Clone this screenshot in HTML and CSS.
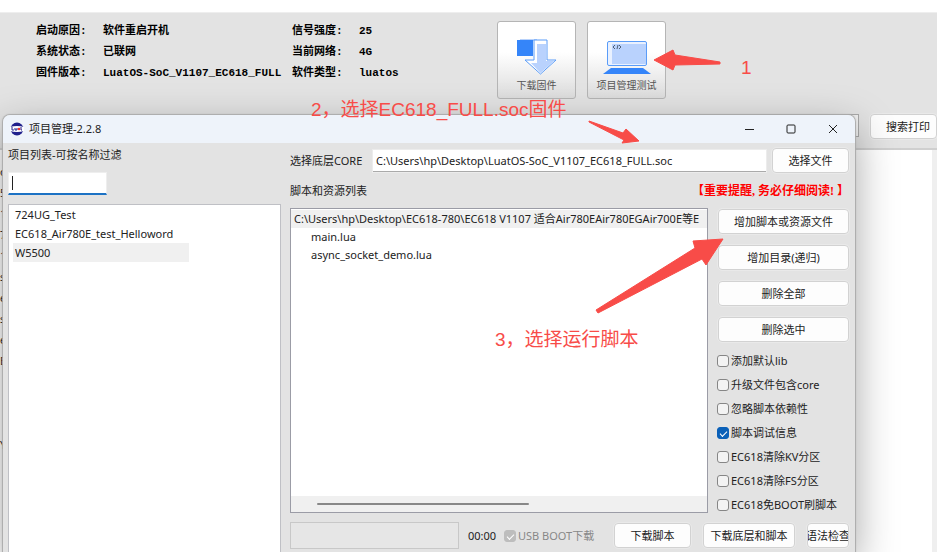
FILE: index.html
```html
<!DOCTYPE html>
<html lang="zh-CN">
<head>
<meta charset="utf-8">
<title>项目管理-2.2.8</title>
<link rel="stylesheet" href="styles.css">
</head>
<body>
<main class="app">
  <header class="status">
    <dl class="info info-wide">
      <dt>启动原因:</dt><dd>软件重启开机</dd>
      <dt>系统状态:</dt><dd>已联网</dd>
      <dt>固件版本:</dt><dd>LuatOS-SoC_V1107_EC618_FULL</dd>
    </dl>
    <dl class="info">
      <dt>信号强度:</dt><dd>25</dd>
      <dt>当前网络:</dt><dd>4G</dd>
      <dt>软件类型:</dt><dd>luatos</dd>
    </dl>
    <div class="tools">
      <button class="tool" type="button">
        <svg width="42" height="38" viewBox="0 0 42 38" aria-hidden="true">
          <path d="M4 1h17v2H4z" fill="#b8d2fb"/>
          <path d="M1 2h16v16H1z" fill="#3585f9"/>
          <path d="M18 2h13v20h9L24.500 36 9 22h9z" fill="#fff" stroke="#5a9cf8" stroke-linejoin="round"/>
          <path d="M21 6h9v17h8L24.500 35 15 25h6z" fill="#b9d2fd"/>
        </svg>
        <span>下载固件</span>
      </button>
      <button class="tool" type="button">
        <svg width="50" height="38" viewBox="0 0 50 38" aria-hidden="true">
          <rect x="5.500" y="3.500" width="39" height="24" rx="1.500" fill="#e9f1ff" stroke="#5a9cf8"/>
          <path d="M10 6h34v20H10z" fill="#b9d2fd"/>
          <path d="M13 7l-2 2 2 2M16 7l-1 4M17 7l2 2-2 2" fill="none" stroke="#345" stroke-width=".8"/>
          <path d="M9 30h32l8 6H1z" fill="#3585f9"/>
        </svg>
        <span>项目管理测试</span>
      </button>
    </div>
  </header>
  <div class="search">
    <input class="search-text" type="text" aria-label="搜索">
    <button class="btn search-btn" type="button">搜索打印</button>
  </div>
  <section class="log">
    <div class="log-text">
      <p>o</p><p>5</p><p>1</p><p>7</p><p>1</p><p>s</p><p>e</p><p>s</p><p>e</p><p>E</p><p></p><p></p><p></p><p>Y</p>
    </div>
    <div class="log-track"></div>
  </section>
</main>

<section class="dialog">
  <header class="titlebar">
    <svg width="14" height="14" viewBox="0 0 14 14" aria-hidden="true">
      <circle cx="7" cy="7" r="6.500" fill="#20208c"/>
      <path d="M0 5q7-2 14 0v4q-7 2-14 0z" fill="#fff"/>
      <path d="M2 5v3h2M5 6v2h2V6M11 5v3h1" fill="none" stroke="#20208c"/>
      <circle cx="9" cy="7" r="1.300" fill="#e33"/>
    </svg>
    <h1>项目管理-2.2.8</h1>
    <div class="controls">
      <button type="button" aria-label="最小化"><svg width="10" height="10" viewBox="0 0 10 10"><path d="M1 5.500h9"/></svg></button>
      <button type="button" aria-label="最大化"><svg width="10" height="10" viewBox="0 0 10 10"><rect x="1" y="1" width="8" height="8" rx="1"/></svg></button>
      <button type="button" aria-label="关闭"><svg width="10" height="10" viewBox="0 0 10 10"><path d="M1 1l8 8M9 1L1 9"/></svg></button>
    </div>
  </header>
  <div class="content">
    <aside class="projects">
      <label for="filter">项目列表-可按名称过滤</label>
      <div class="filter-box"><input id="filter" type="text"><i class="caret"></i></div>
      <ul class="project-list">
        <li>724UG_Test</li>
        <li>EC618_Air780E_test_Helloword</li>
        <li class="selected">W5500</li>
      </ul>
    </aside>
    <div class="detail">
      <div class="core-row">
        <label for="core">选择底层CORE</label>
        <input id="core" type="text" value="C:\Users\hp\Desktop\LuatOS-SoC_V1107_EC618_FULL.soc">
        <button class="btn pick" type="button">选择文件</button>
      </div>
      <div class="caption-row"><span>脚本和资源列表</span><strong>【重要提醒, 务必仔细阅读! 】</strong></div>
      <div class="work">
        <div class="scripts">
          <ul>
            <li class="root">C:\Users\hp\Desktop\EC618-780\EC618 V1107 适合Air780EAir780EGAir700E等E</li>
            <li>main.lua</li>
            <li>async_socket_demo.lua</li>
          </ul>
          <div class="track"><div class="thumb"></div></div>
        </div>
        <div class="side">
          <button class="btn" type="button">增加脚本或资源文件</button>
          <button class="btn" type="button">增加目录(递归)</button>
          <button class="btn" type="button">删除全部</button>
          <button class="btn" type="button">删除选中</button>
          <div class="options">
            <label><input type="checkbox">添加默认lib</label>
            <label><input type="checkbox">升级文件包含core</label>
            <label><input type="checkbox">忽略脚本依赖性</label>
            <label><input type="checkbox" checked>脚本调试信息</label>
            <label><input type="checkbox">EC618清除KV分区</label>
            <label><input type="checkbox">EC618清除FS分区</label>
            <label><input type="checkbox">EC618免BOOT刷脚本</label>
          </div>
        </div>
      </div>
      <footer class="actions">
        <div class="progress"></div>
        <span class="time">00:00</span>
        <label class="usb"><input type="checkbox" checked disabled>USB BOOT下载</label>
        <button class="btn download" type="button">下载脚本</button>
        <button class="btn download-all" type="button">下载底层和脚本</button>
        <button class="btn check" type="button">语法检查</button>
      </footer>
    </div>
  </div>
</section>

<div class="notes">
  <svg width="937" height="552" viewBox="0 0 937 552" aria-hidden="true">
    <path d="M654 60L673 50 675 55 720 62V64L675 65 673 70Z"/>
    <path d="M589 121L623 133 626 129 639 141 622 143 624 140 589 122Z"/>
    <path d="M596 310L695 248 693 241 723 239 706 265 702 259 598 313Z"/>
  </svg>
  <span class="note note-one">1</span>
  <span class="note note-two">2，选择EC618_FULL.soc固件</span>
  <span class="note note-three">3，选择运行脚本</span>
</div>
</body>
</html>
```
FILE: styles.css
```css
* { box-sizing: border-box; }

body {
  margin: 0;
  height: 100vh;
  overflow: hidden;
  position: relative;
  background: #fff;
  color: #222;
  font: 11px/18px "Noto Sans", "Noto Sans CJK SC", sans-serif;
}

ul, dl, dd, p, h1 { margin: 0; padding: 0; }
ul { list-style: none; }
button, input { font: inherit; color: inherit; margin: 0; }

.btn {
  height: 25px;
  padding: 0;
  background: #fdfdfd;
  border: 1px solid #d2d2d2;
  border-radius: 4px;
  outline: 1px solid #e9e9e9;
  white-space: nowrap;
  overflow: hidden;
}

/* Main window behind the dialog */
.app {
  height: 100%;
  padding-top: 12px;
  display: flex;
  flex-direction: column;
}

.status {
  height: 102px;
  padding: 8px 0 0 36px;
  display: flex;
  background: #e3e3e3;
  border-top: 1px solid #eee;
}

.info {
  display: grid;
  grid-template-columns: 67px 1fr;
  grid-auto-rows: 21px;
  align-content: start;
  width: 205px;
  color: #000;
  font: bold 11px/20px "Liberation Mono", "Noto Sans CJK SC", monospace;
}

.info-wide { width: 256px; }

.tools { display: flex; gap: 11px; }

.tool {
  width: 79px;
  height: 78px;
  padding: 10px 0 0;
  display: flex;
  flex-direction: column;
  align-items: center;
  background: linear-gradient(#fff 40%, #dcdcdc);
  border: 1px solid #b5b5b5;
  border-radius: 3px;
  color: #555;
  font-size: 10px;
  line-height: 18px;
}

.tool svg { margin-top: 6px; flex: none; }

.search {
  height: 36px;
  display: flex;
  justify-content: flex-end;
  gap: 11px;
  background: #e3e3e3;
  border-bottom: 2px solid #cfcfcf;
}

.search-text {
  width: 320px;
  height: 23px;
  background: #f2f2f2;
  border: 1px solid #aaa;
}

.search-btn { width: 67px; padding-left: 9px; }

.log { flex: 1; display: flex; min-height: 0; }
.log-text { flex: 1; padding-top: 11px; overflow: hidden; }
.log-text p { height: 21px; line-height: 21px; }
.log-track { width: 5px; background: #efefef; }

/* Dialog window */
.dialog {
  position: absolute;
  top: 115px;
  right: 82px;
  bottom: 0;
  left: 3px;
  display: flex;
  flex-direction: column;
  background: #e3e3e3;
  border-radius: 7px 7px 0 0;
  box-shadow: 0 0 1px 1px #aaa, 0 14px 42px rgba(0, 0, 0, .36);
  overflow: hidden;
}

.titlebar {
  height: 28px;
  padding: 0 17px 0 7px;
  display: flex;
  align-items: center;
  gap: 5px;
  background: #eef3fa;
}

.titlebar h1 { font-size: 11px; font-weight: normal; }
.controls { margin-left: auto; display: flex; gap: 32px; }

.controls button {
  padding: 0;
  width: 10px;
  height: 10px;
  display: flex;
  background: none;
  border: 0;
}

.controls path, .controls rect { fill: none; stroke: #222; }

.content {
  flex: 1;
  min-height: 0;
  display: flex;
  gap: 9px;
  padding: 0 6px 0 5px;
}

.projects { width: 273px; display: flex; flex-direction: column; padding-top: 3px; }
.filter-box { position: relative; margin: 8px 0 9px; height: 23px; }

.filter-box input {
  display: block;
  width: 99px;
  height: 23px;
  padding: 0 4px;
  background: #fff;
  border: 1px solid #eee;
  border-bottom: 2px solid #1d72c4;
}

.caret { position: absolute; left: 4px; top: 4px; width: 1px; height: 14px; background: #222; }

.project-list {
  flex: 1;
  padding: 0 4px;
  background: #fff;
  border: 1px solid #bfc0c5;
  border-bottom: 0;
}

.project-list li { width: 176px; height: 19px; padding-left: 2px; line-height: 19px; }
.project-list .selected { background: #f0f0f0; }

.detail {
  flex: 1;
  min-width: 0;
  display: flex;
  flex-direction: column;
  padding: 5px 0 3px;
}

.core-row { display: flex; align-items: center; height: 25px; }
.core-row label { width: 83px; }

.core-row input {
  flex: 1;
  min-width: 0;
  height: 22px;
  padding: 0 3px;
  background: #fff;
  border: 0;
  border-bottom: 1px solid #aaa;
  outline: 1px solid #ececec;
}

.pick { width: 77px; margin-left: 6px; }

.caption-row { height: 35px; display: flex; justify-content: space-between; align-items: center; }
.caption-row strong { color: #f00; font: bold 12px/18px "Liberation Serif", "Noto Sans CJK SC", serif; }

.work { flex: 1; min-height: 0; display: flex; gap: 10px; }

.scripts {
  flex: 1;
  min-width: 0;
  display: flex;
  flex-direction: column;
  justify-content: space-between;
  background: #fff;
  border: 1px solid #9b9ca6;
}

.scripts ul { padding-top: 1px; overflow: hidden; }
.scripts li { height: 18px; padding-left: 20px; white-space: nowrap; }
.scripts .root { padding-left: 3px; background: #f0f0f0; overflow: hidden; }
.track { height: 16px; padding: 7px 178px 0 26px; background: #f0f0f0; }
.thumb { height: 2px; background: #888; border-radius: 1px; }

.side { width: 131px; padding-top: 1px; display: flex; flex-direction: column; gap: 11px; }
.side .btn { flex: none; }
.options { margin: -4px 0 0 -1px; display: grid; grid-auto-rows: 24px; }
.options label, .usb { display: flex; align-items: center; gap: 2px; white-space: nowrap; }

input[type="checkbox"] {
  appearance: none;
  flex: none;
  width: 12px;
  height: 12px;
  background: #f3f3f3;
  border: 1px solid #868686;
  border-radius: 3px;
}

input[type="checkbox"]:checked {
  display: grid;
  place-items: center;
  background: #0a60b8;
  border-color: #0a60b8;
}

input[type="checkbox"]:checked::after {
  content: "";
  width: 6px;
  height: 3px;
  border: solid #fff;
  border-width: 0 0 1px 1px;
  transform: rotate(-45deg);
}

input[type="checkbox"]:disabled { background: #bdbdbd; border-color: #bdbdbd; }

.actions { display: flex; align-items: center; height: 27px; margin-top: 9px; }
.progress { width: 169px; height: 27px; background: #e6e6e6; border: 1px solid #c8c8c8; }
.time { width: 45px; padding-left: 9px; }
.usb { flex: 1; color: #888; }
.download { width: 77px; }
.download-all { width: 92px; margin: 0 12px; }
.check { width: 42px; display: flex; align-items: center; justify-content: center; }

/* Step markers drawn over the screen */
.notes { position: absolute; inset: 0; overflow: hidden; pointer-events: none; color: #f84c48; }
.notes svg { display: block; fill: #f84c48; stroke: #f84c48; stroke-linejoin: round; }
.note { position: absolute; font: 19px/24px "Liberation Sans", "Noto Sans CJK SC", sans-serif; white-space: nowrap; }
.note-one { left: 741px; top: 56px; }
.note-two { left: 311px; top: 98px; }
.note-three { left: 495px; top: 328px; }
```
